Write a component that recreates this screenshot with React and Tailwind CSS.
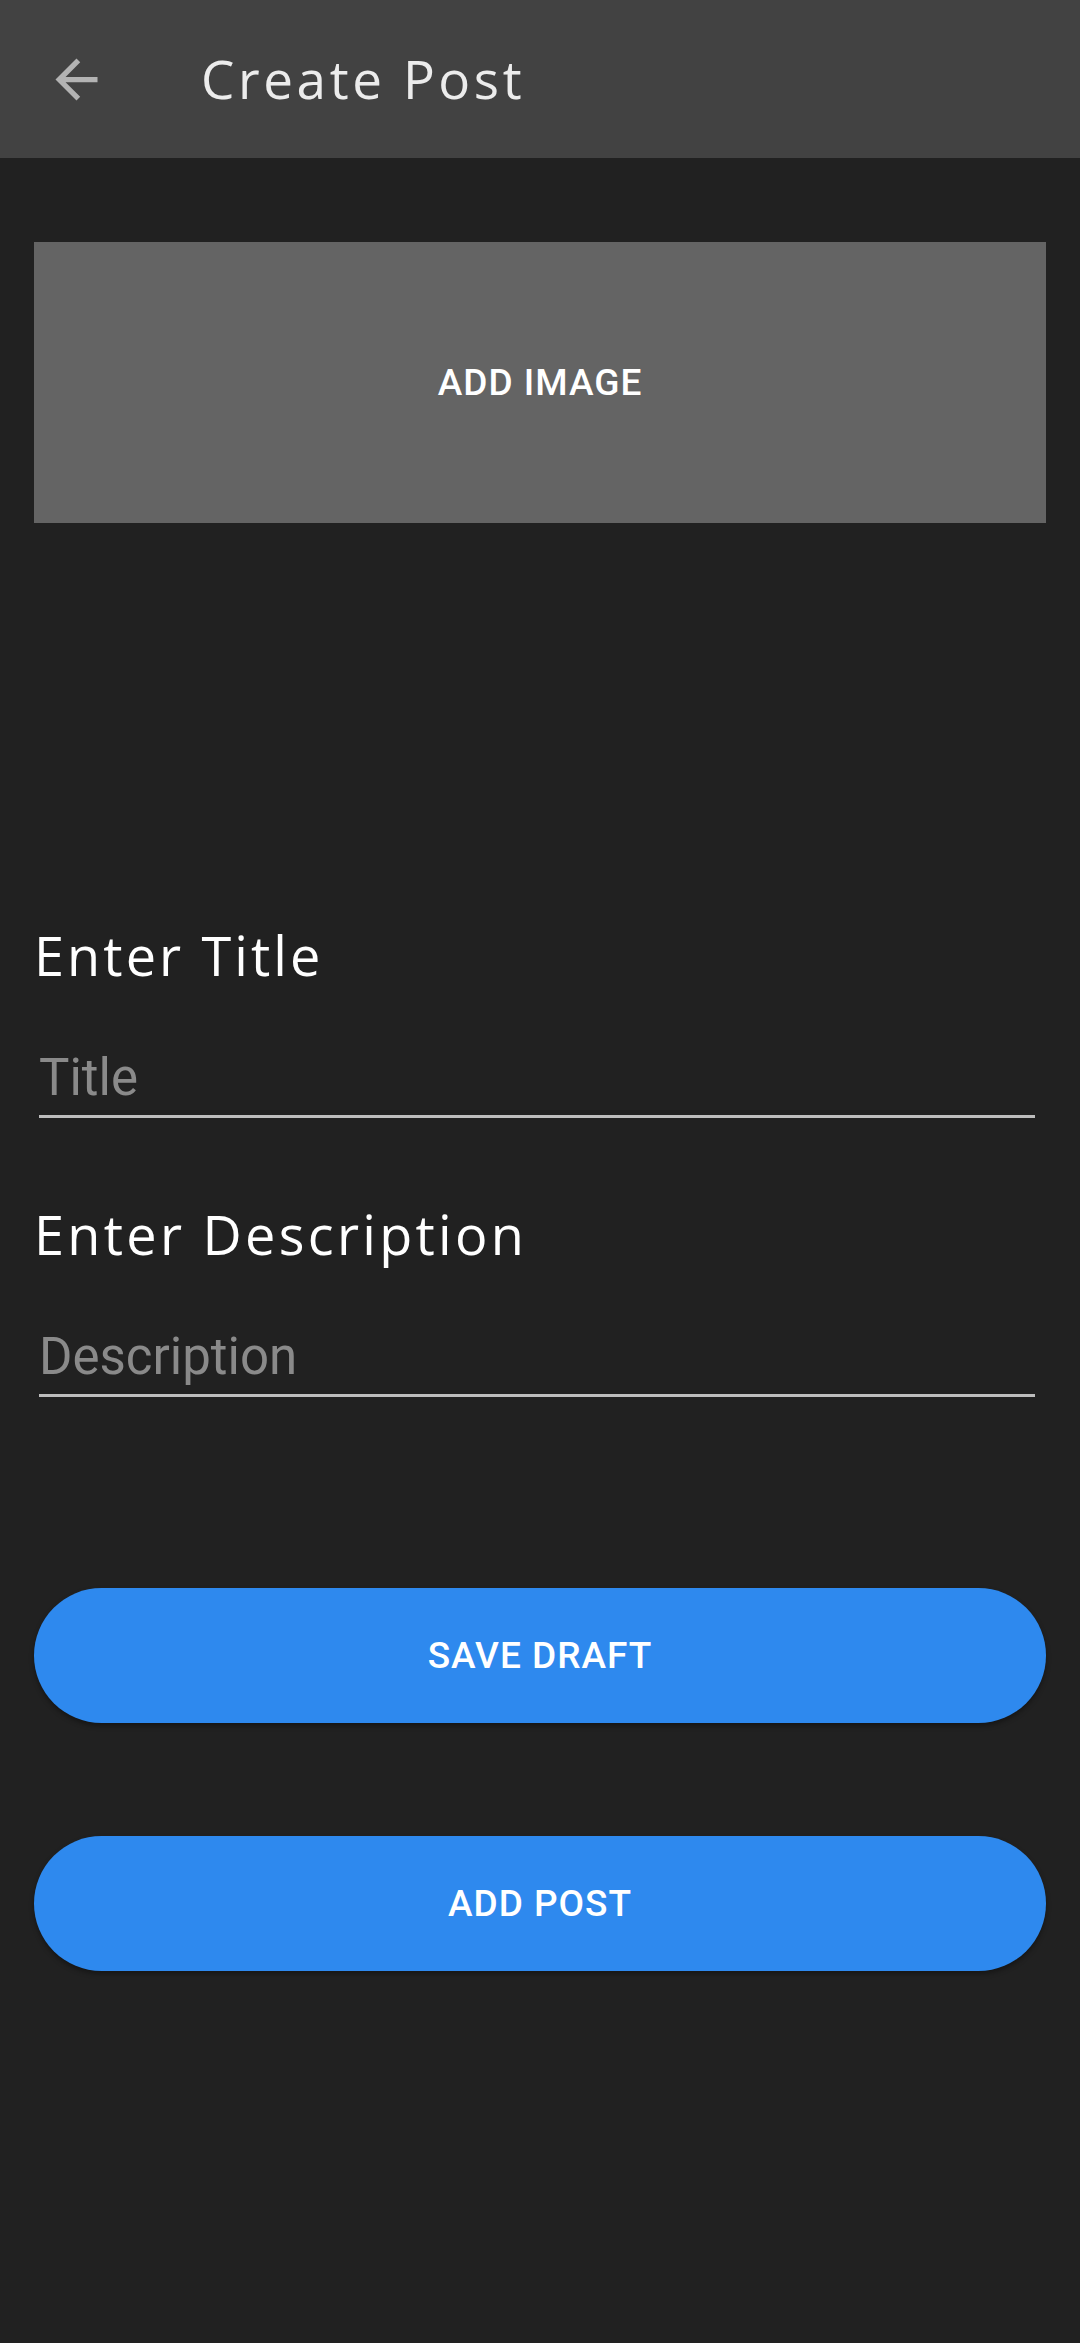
export default function App() {
  return (
    <div className="min-h-screen w-full bg-[#212121] flex flex-col">
      <header className="h-[158px] bg-[#424242] flex items-center shrink-0">
        <svg className="ml-[45px] w-[63px] h-[63px]" viewBox="0 0 24 24" fill="#b3b3b3">
          <path d="M20 11H7.83l5.59-5.59L12 4l-8 8 8 8 1.41-1.41L7.83 13H20v-2z" />
        </svg>
        <h1 className="ml-[93px] font-['Open_Sans',sans-serif] text-[53px] leading-[64px] font-normal text-[#ececec] tracking-[3.6px]">
          Create Post
        </h1>
      </header>

      <main className="px-[34px] flex flex-col">
        <button className="mt-[84px] h-[281px] bg-[#646464] flex items-center justify-center font-['Roboto',sans-serif] text-white text-[37px] font-medium tracking-[1px]">
          ADD IMAGE
        </button>

        <div className="mt-[400px] font-['Open_Sans',sans-serif] text-[54px] leading-[64px] font-normal text-white tracking-[3.1px]">
          Enter Title
        </div>
        <div className="mt-[59px] ml-[5px] mr-[11px] pb-[5px] border-b-[3px] border-[#bdbdbd]">
          <div className="font-['Roboto',sans-serif] text-[51px] leading-[64px] text-[#8a8a8a]">
            Title
          </div>
        </div>

        <div className="mt-[84px] font-['Open_Sans',sans-serif] text-[54px] leading-[64px] font-normal text-white tracking-[3.3px]">
          Enter Description
        </div>
        <div className="mt-[59px] ml-[5px] mr-[11px] pb-[5px] border-b-[3px] border-[#bdbdbd]">
          <div className="font-['Roboto',sans-serif] text-[51px] leading-[64px] text-[#8a8a8a]">
            Description
          </div>
        </div>

        <button className="mt-[191px] h-[135px] rounded-full bg-[#2e89ee] shadow-[0_3px_5px_rgba(0,0,0,0.35)] flex items-center justify-center font-['Roboto',sans-serif] text-white text-[37px] font-medium tracking-[1px]">
          SAVE DRAFT
        </button>
        <button className="mt-[113px] h-[135px] rounded-full bg-[#2e89ee] shadow-[0_3px_5px_rgba(0,0,0,0.35)] flex items-center justify-center font-['Roboto',sans-serif] text-white text-[37px] font-medium tracking-[1px]">
          ADD POST
        </button>
      </main>
    </div>
  );
}
